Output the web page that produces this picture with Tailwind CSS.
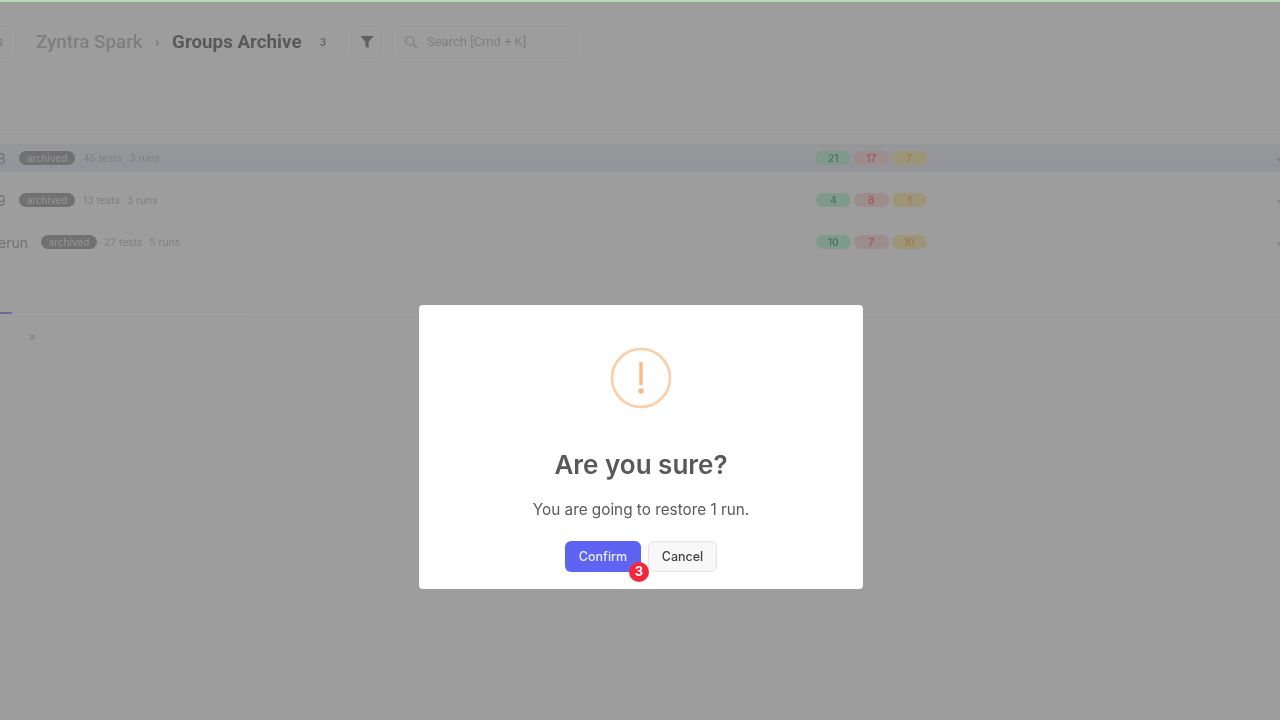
<!DOCTYPE html>
<html>
<head>
<meta charset="utf-8">
<script src="https://cdn.jsdelivr.net/npm/@tailwindcss/browser@4"></script>
</head>
<body class="m-0">
<div class="relative w-[1280px] h-[720px] overflow-hidden bg-white font-['Inter',sans-serif] blur-[0.4px]">
  <div class="flex flex-col h-full opacity-50">
    <header class="flex items-center h-[84px] shrink-0 -ml-[44px]">
      <div class="flex items-center justify-end w-[60px] h-[32px] border border-neutral-100 rounded-md pr-[12px] text-[12px] text-neutral-500 font-['Roboto',sans-serif]">Runs</div>
      <span class="ml-[20px] text-[18.8px] font-medium text-neutral-400 font-['Roboto',sans-serif]">Zyntra Spark</span>
      <span class="mx-[12.5px] text-[15px] text-neutral-500 font-['Roboto',sans-serif]">›</span>
      <span class="text-[18.8px] font-bold text-neutral-800 font-['Roboto',sans-serif]">Groups Archive</span>
      <span class="ml-[18px] text-[10px] font-semibold text-neutral-700">3</span>
      <button class="ml-[25px] w-[31px] h-[32px] flex items-center justify-center border border-neutral-100 rounded-md">
        <svg width="14" height="14" viewBox="0 0 14 14"><path d="M0.5 1h13L8.6 7v6.3L5.4 11.4V7z" fill="#404040"/></svg>
      </button>
      <div class="ml-[10px] w-[186px] h-[32px] flex items-center gap-[9px] pl-[11px] border border-neutral-100 rounded-md">
        <svg width="14" height="14" viewBox="0 0 14 14" fill="none" stroke="#a3a3a3" stroke-width="1.2"><circle cx="5.8" cy="5.8" r="4.3"/><path d="M9 9l4 4"/></svg>
        <span class="text-[13px] text-neutral-400 font-['Roboto',sans-serif]">Search [Cmd + K]</span>
      </div>
    </header>

    <div class="mt-[50px] border-t border-neutral-100 flex flex-col">
      <div class="h-[9px]"></div>
      <div class="flex items-center h-[28px] bg-gradient-to-b from-[#eceef5] to-[#e3e6f0]">
        <div class="flex items-center w-[816px] -ml-[3px]">
          <span class="text-[14px] text-neutral-500 w-[22px]">8</span>
          <span class="rounded-full bg-neutral-500 text-white/80 text-[10px] h-[14px] w-[56px] flex items-center justify-center">archived</span>
          <span class="ml-[8px] pt-[1px] text-[10.3px] text-neutral-400">45 tests</span>
          <span class="ml-[7px] pt-[1px] text-[10.3px] text-neutral-400">3 runs</span>
        </div>
        <div class="flex gap-[3.5px] ml-[3px]">
          <span class="w-[34.5px] h-[14px] rounded-full bg-emerald-200 text-emerald-700 text-[10px] font-semibold flex items-center justify-center">21</span>
          <span class="w-[34.5px] h-[14px] rounded-full bg-red-200 text-red-500 text-[10px] font-semibold flex items-center justify-center">17</span>
          <span class="w-[34.5px] h-[14px] rounded-full bg-amber-200 text-amber-500 text-[10px] font-semibold flex items-center justify-center">7</span>
        </div>
        <span class="ml-auto -mr-[3px] w-[5px] h-[5px] border-b border-r border-neutral-500 rotate-45"></span>
      </div>
      <div class="flex items-center h-[42px] mt-[7px]">
        <div class="flex items-center w-[816px] -ml-[3px]">
          <span class="text-[14px] text-neutral-500 w-[22px]">9</span>
          <span class="rounded-full bg-neutral-500 text-white/80 text-[10px] h-[14px] w-[56px] flex items-center justify-center">archived</span>
          <span class="ml-[8px] pt-[1px] text-[10.3px] text-neutral-400">13 tests</span>
          <span class="ml-[7px] pt-[1px] text-[10.3px] text-neutral-400">3 runs</span>
        </div>
        <div class="flex gap-[3.5px] ml-[3px]">
          <span class="w-[34.5px] h-[14px] rounded-full bg-emerald-200 text-emerald-700 text-[10px] font-semibold flex items-center justify-center">4</span>
          <span class="w-[34.5px] h-[14px] rounded-full bg-red-200 text-red-500 text-[10px] font-semibold flex items-center justify-center">8</span>
          <span class="w-[34.5px] h-[14px] rounded-full bg-amber-200 text-amber-500 text-[10px] font-semibold flex items-center justify-center">1</span>
        </div>
        <span class="ml-auto -mr-[3px] w-[5px] h-[5px] border-b border-r border-neutral-500 rotate-45"></span>
      </div>
      <div class="flex items-center h-[42px]">
        <div class="flex items-center w-[816px] -ml-[7px]">
          <span class="text-[14px] text-neutral-500 w-[48px]">rerun</span>
          <span class="rounded-full bg-neutral-500 text-white/80 text-[10px] h-[14px] w-[56px] flex items-center justify-center">archived</span>
          <span class="ml-[7px] pt-[1px] text-[10.3px] text-neutral-400">27 tests</span>
          <span class="ml-[7px] pt-[1px] text-[10.3px] text-neutral-400">5 runs</span>
        </div>
        <div class="flex gap-[3.5px] ml-[7px]">
          <span class="w-[34.5px] h-[14px] rounded-full bg-emerald-200 text-emerald-700 text-[10px] font-semibold flex items-center justify-center">10</span>
          <span class="w-[34.5px] h-[14px] rounded-full bg-red-200 text-red-500 text-[10px] font-semibold flex items-center justify-center">7</span>
          <span class="w-[34.5px] h-[14px] rounded-full bg-amber-200 text-amber-500 text-[10px] font-semibold flex items-center justify-center">10</span>
        </div>
        <span class="ml-auto -mr-[3px] w-[5px] h-[5px] border-b border-r border-neutral-500 rotate-45"></span>
      </div>
    </div>

    <div class="mt-[49px] border-t border-neutral-100 relative">
      <div class="absolute left-0 -top-[1px] w-[12px] h-[2px] bg-indigo-500"></div>
      <div class="pl-[29px] pt-[16px] text-[12px] leading-[16px] text-neutral-400">»</div>
    </div>
  </div>

  <div class="absolute inset-0 bg-black/[.385] flex items-start justify-center pt-[305px]">
    <div class="w-[444px] h-[284px] ml-[2px] bg-white rounded-[4px] flex flex-col items-center pt-[42px]">
      <svg width="62" height="62" viewBox="0 0 62 62" fill="none">
        <circle cx="31" cy="31" r="29" stroke="#facea8" stroke-width="2.6"/>
        <path d="M31 15v23" stroke="#f8bb86" stroke-width="3.4"/>
        <circle cx="31" cy="44" r="2.8" fill="#f8bb86"/>
      </svg>
      <h2 class="mt-[38px] text-[26px] leading-[36px] font-semibold text-[#595959]">Are you sure?</h2>
      <p class="mt-[15px] text-[15.3px] leading-[24px] text-[#595959]">You are going to restore 1 run.</p>
      <div class="mt-[19px] flex gap-[7px] relative">
        <button class="w-[76px] h-[31px] pt-[1px] rounded-md bg-[#5f63f2] text-white/90 text-[12.5px] font-medium">Confirm</button>
        <button class="w-[69px] h-[31px] pt-[1px] rounded-md bg-neutral-100/70 border border-neutral-200 text-neutral-700 text-[12.5px] font-medium">Cancel</button>
        <span class="absolute left-[64px] top-[21px] w-[20px] h-[20px] rounded-full bg-[#f5263c] text-white text-[13px] font-bold flex items-center justify-center">3</span>
      </div>
    </div>
  </div>
  <div class="absolute top-0 inset-x-0 h-[2px] bg-[#b8d8b8]"></div>
</div>
</body>
</html>
